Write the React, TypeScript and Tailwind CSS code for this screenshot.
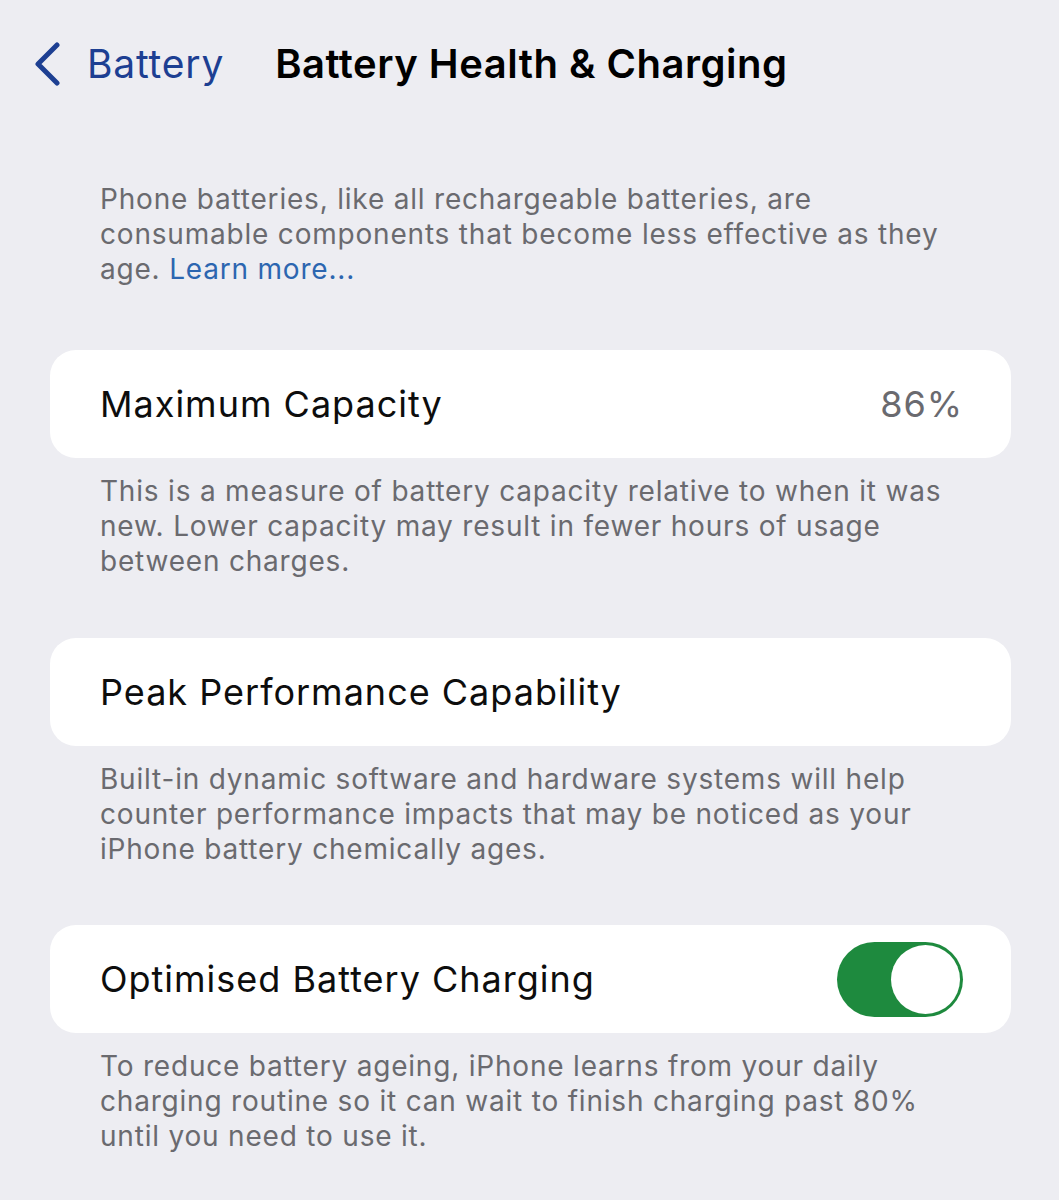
import React from 'react';

const FONT = { fontFamily: 'Inter, "Noto Sans", sans-serif' };

function Card({ label, children }: { label: string; children?: React.ReactNode }) {
  return (
    <div className="ml-[50px] mr-[48px] flex h-[108px] items-center justify-between rounded-[26px] bg-white pl-[50px] pr-[48px]">
      <span className="text-[36px] tracking-[1px] text-[#0d0d0d]">{label}</span>
      {children}
    </div>
  );
}

function Footer({ children }: { children: React.ReactNode }) {
  return (
    <p className="mt-[16px] whitespace-nowrap px-[100px] text-[28px] leading-[35px] tracking-[0.8px] text-[#6a6a6f]">
      {children}
    </p>
  );
}

function Toggle() {
  return (
    <div className="flex h-[75px] w-[126px] items-center justify-end rounded-full bg-[#1e8a3e] p-[3px]">
      <div className="h-[69px] w-[69px] rounded-full bg-white" />
    </div>
  );
}

export default function App() {
  return (
    <div className="min-h-[1200px] w-[1059px] bg-[#ededf2] pb-10" style={FONT}>
      <div className="flex h-[128px] items-center pl-[33px]">
        <svg width="28" height="44" viewBox="0 0 28 44" className="mr-[26px]">
          <path d="M24 3 L5 22 L24 41" fill="none" stroke="#1d3f92" strokeWidth="5" strokeLinecap="round" strokeLinejoin="round" />
        </svg>
        <span className="text-[39px] tracking-[0.8px] text-[#1d3f92]">Battery</span>
        <span className="ml-[51px] text-[40px] font-semibold tracking-[0.5px] text-black">Battery Health &amp; Charging</span>
      </div>

      <p className="mt-[54px] whitespace-nowrap px-[100px] text-[28px] leading-[35px] tracking-[0.8px] text-[#6a6a6f]">
        Phone batteries, like all rechargeable batteries, are
        <br />
        consumable components that become less effective as they
        <br />
        age. <span className="text-[#2c66b0]">Learn more...</span>
      </p>

      <div className="mt-[63px]">
        <Card label="Maximum Capacity">
          <span className="text-[36px] tracking-[0.9px] text-[#6a6a6f]">86%</span>
        </Card>
        <Footer>
          This is a measure of battery capacity relative to when it was
          <br />
          new. Lower capacity may result in fewer hours of usage
          <br />
          between charges.
        </Footer>
      </div>

      <div className="mt-[59px]">
        <Card label="Peak Performance Capability" />
        <Footer>
          Built-in dynamic software and hardware systems will help
          <br />
          counter performance impacts that may be noticed as your
          <br />
          iPhone battery chemically ages.
        </Footer>
      </div>

      <div className="mt-[58px]">
        <Card label="Optimised Battery Charging">
          <Toggle />
        </Card>
        <Footer>
          To reduce battery ageing, iPhone learns from your daily
          <br />
          charging routine so it can wait to finish charging past 80%
          <br />
          until you need to use it.
        </Footer>
      </div>
    </div>
  );
}
